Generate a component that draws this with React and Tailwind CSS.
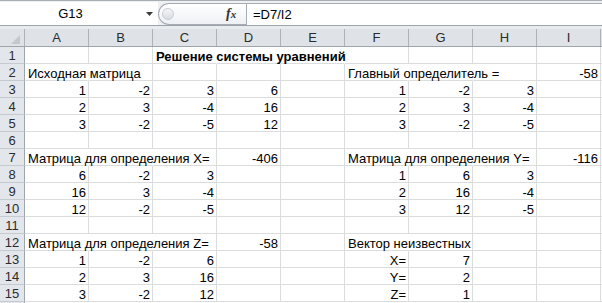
import React from 'react';

const COLS = ['A', 'B', 'C', 'D', 'E', 'F', 'G', 'H', 'I'];

// cell values by row; strings go left, numbers go right
const rows = [
  { n: 1, cells: { 2: { v: 'Решение системы уравнений', b: true } }, hide: [2, 3, 4] },
  { n: 2, cells: { 0: 'Исходная матрица', 5: 'Главный определитель =', 8: -58 }, hide: [0, 5, 6] },
  { n: 3, cells: { 0: 1, 1: -2, 2: 3, 3: 6, 5: 1, 6: -2, 7: 3 } },
  { n: 4, cells: { 0: 2, 1: 3, 2: -4, 3: 16, 5: 2, 6: 3, 7: -4 } },
  { n: 5, cells: { 0: 3, 1: -2, 2: -5, 3: 12, 5: 3, 6: -2, 7: -5 } },
  { n: 6, cells: {} },
  { n: 7, cells: { 0: 'Матрица для определения X=', 3: -406, 5: 'Матрица для определения Y=', 8: -116 }, hide: [0, 1, 5, 6] },
  { n: 8, cells: { 0: 6, 1: -2, 2: 3, 5: 1, 6: 6, 7: 3 } },
  { n: 9, cells: { 0: 16, 1: 3, 2: -4, 5: 2, 6: 16, 7: -4 } },
  { n: 10, cells: { 0: 12, 1: -2, 2: -5, 5: 3, 6: 12, 7: -5 } },
  { n: 11, cells: {} },
  { n: 12, cells: { 0: 'Матрица для определения Z=', 3: -58, 5: 'Вектор неизвестных' }, hide: [0, 1, 5] },
  { n: 13, cells: { 0: 1, 1: -2, 2: 6, 5: { v: 'X=', r: true }, 6: 7 } },
  { n: 14, cells: { 0: 2, 1: 3, 2: 16, 5: { v: 'Y=', r: true }, 6: 2 } },
  { n: 15, cells: { 0: 3, 1: -2, 2: 12, 5: { v: 'Z=', r: true }, 6: 1 } },
];

const Cell = ({ data, hidden }) => {
  let v = data;
  let right = typeof data === 'number';
  let bold = false;
  if (data && typeof data === 'object') {
    v = data.v;
    right = !!data.r;
    bold = !!data.b;
  }
  return (
    <div
      className={`w-[64px] h-[17px] shrink-0 border-b border-r border-b-[#dadcdd] ${
        hidden ? 'border-r-transparent' : 'border-r-[#dadcdd]'
      }`}
    >
      {v !== undefined && (
        <div
          className={`relative z-10 h-[16px] flex items-end pl-[3px] pr-[2px] leading-[12px] whitespace-nowrap ${
            right ? 'justify-end' : 'justify-start'
          } ${bold ? 'font-bold' : ''}`}
        >
          {v}
        </div>
      )}
    </div>
  );
};

const FormulaBar = () => (
  <div className="h-[29px] flex flex-col bg-[#eef0f2]">
    <div className="h-[1px] bg-[#a9aeb5]" />
    <div className="h-[24px] flex">
      {/* name box */}
      <div className="w-[141px] mt-[1px] bg-white flex items-center justify-center text-[13px] text-black">
        G13
      </div>
      <div className="w-[17px] mt-[1px] bg-white flex items-center justify-center">
        <svg width="7" height="4" viewBox="0 0 7 4">
          <path d="M0 0h7L3.5 4z" fill="#3c3c3c" />
        </svg>
      </div>
      {/* splitter + fx */}
      <div className="w-[88px] mt-[2px] h-[22px] rounded-l-[11px] border border-r-0 border-[#a5acb5] bg-gradient-to-b from-white to-[#eef1f4] flex items-center">
        <div className="ml-[3px] w-[12px] h-[12px] rounded-full border border-[#c8cdd3] bg-gradient-to-b from-[#f4f5f7] to-[#d9dde2]" />
        <div
          className="ml-[52px] text-[14px] leading-none italic font-bold text-[#333]"
          style={{ fontFamily: '"Liberation Serif", serif' }}
        >
          f<span className="text-[11px]">x</span>
        </div>
      </div>
      {/* formula */}
      <div className="flex-1 mt-[2px] h-[22px] bg-white border-l border-t border-[#a5acb5] flex items-center pl-[6px] text-[13px] text-black">
        =D7/I2
      </div>
    </div>
    <div className="h-[1px] bg-[#9ba2aa]" />
    <div className="h-[3px] bg-[#e9ecef]" />
  </div>
);

export default function App() {
  return (
    <div
      className="w-[602px] h-[303px] overflow-hidden bg-white text-[13px] text-black"
      style={{ fontFamily: '"Liberation Sans", Arial, sans-serif' }}
    >
      <FormulaBar />

      {/* column headers */}
      <div className="flex h-[18px] bg-[#dfe3e8] border-b border-[#9ea5ad]">
        <div className="w-[25px] shrink-0 border-r border-[#aeb3b9] flex items-end justify-end pr-[4px] pb-[2px]">
          <svg width="9" height="9" viewBox="0 0 9 9">
            <path d="M9 0v9H0z" fill="#c3c8ce" />
          </svg>
        </div>
        {COLS.map((c) => (
          <div
            key={c}
            className="w-[64px] shrink-0 border-r border-[#aeb3b9] flex items-center justify-center text-[#2b2b2b]"
          >
            {c}
          </div>
        ))}
        <div className="flex-1" />
      </div>

      {/* sheet rows */}
      {rows.map((row) => (
        <div key={row.n} className="flex">
          <div className="w-[25px] h-[17px] shrink-0 bg-[#e3e7ec] border-r border-r-[#9ea5ad] border-b border-b-[#c5cad0] flex items-end justify-center leading-[12px] pb-[1px] text-[#2b2b2b]">
            {row.n}
          </div>
          {COLS.map((c, i) => (
            <Cell key={c} data={row.cells[i]} hidden={row.hide && row.hide.includes(i)} />
          ))}
          <div className="flex-1 h-[17px] border-b border-[#dadcdd]" />
        </div>
      ))}
      {/* top edge of row 16 */}
      <div className="flex h-[1px]">
        <div className="w-[25px] bg-[#e3e7ec] border-r border-[#9ea5ad]" />
        <div className="flex-1" />
      </div>
    </div>
  );
}
